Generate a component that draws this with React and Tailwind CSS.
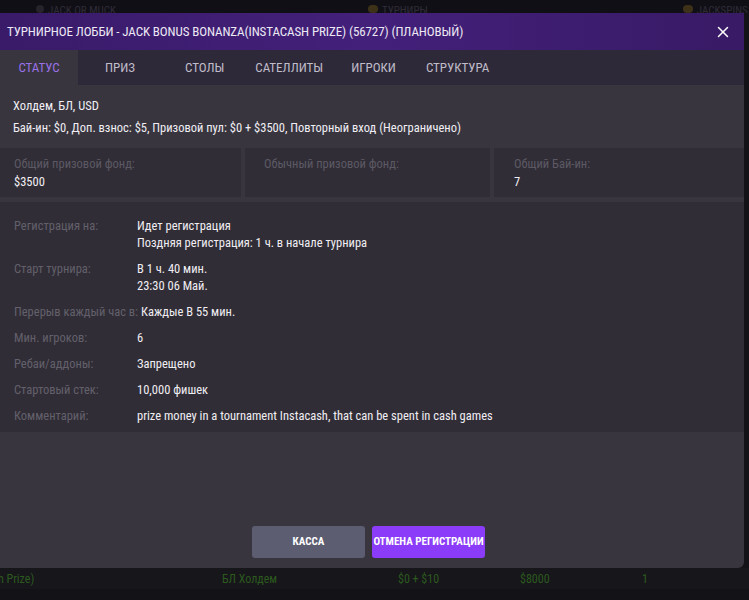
import { X } from "lucide-react";

const tabs = ["СТАТУС", "ПРИЗ", "СТОЛЫ", "САТЕЛЛИТЫ", "ИГРОКИ", "СТРУКТУРА"];

const details = [
  { label: "Регистрация на:", value: ["Идет регистрация", "Поздняя регистрация: 1 ч. в начале турнира"] },
  { label: "Старт турнира:", value: ["В 1 ч. 40 мин.", "23:30 06 Май."] },
  { label: "Перерыв каждый час в:", value: ["Каждые В 55 мин."], tight: true },
  { label: "Мин. игроков:", value: ["6"] },
  { label: "Ребаи/аддоны:", value: ["Запрещено"] },
  { label: "Стартовый стек:", value: ["10,000 фишек"] },
  { label: "Комментарий:", value: ["prize money in a tournament Instacash, that can be spent in cash games"] },
];

const stats = [
  { label: "Общий призовой фонд:", value: "$3500" },
  { label: "Обычный призовой фонд:", value: "" },
  { label: "Общий Бай-ин:", value: "7" },
];

export default function App() {
  return (
    <div
      className="relative h-[600px] w-[749px] overflow-hidden bg-[#131217] text-[13px]"
      style={{ fontFamily: '"Roboto Condensed", "Liberation Sans Narrow", "DejaVu Sans Condensed", Roboto, sans-serif' }}
    >
      {/* page behind the modal */}
      <div className="flex h-[13px] items-start overflow-hidden bg-[#110f16] pt-[5px] text-[11px] leading-[11px] uppercase text-[#2f2c36]">
        <span className="ml-[36px] mr-[4px] h-[8px] w-[8px] rounded-sm bg-[#26232b]" />
        <span>Jack or muck</span>
        <span className="ml-[252px] mr-[4px] h-[8px] w-[10px] rounded-sm bg-[#3d3218]" />
        <span>Турниры</span>
        <span className="ml-[255px] mr-[4px] h-[8px] w-[10px] rounded-sm bg-[#3d3218]" />
        <span>Jackspins</span>
      </div>

      <div className="flex w-[744px] flex-col rounded-br-md bg-[#38353f]">
        {/* header */}
        <div className="flex h-[37px] items-center justify-between bg-gradient-to-r from-[#391b69] via-[#43207a] to-[#381a66] pl-[7px] pr-[12px]">
          <span className="text-[13px] uppercase tracking-[-0.1px] text-[#ece8f4]">
            Турнирное лобби - Jack Bonus Bonanza(Instacash Prize) (56727) (Плановый)
          </span>
          <X className="h-[18px] w-[18px] text-white" strokeWidth={2} />
        </div>

        {/* tabs */}
        <div className="flex h-[35px] bg-[#2d2939] text-[13px] uppercase text-[#c0bcc9]">
          {tabs.map((t, i) => (
            <div
              key={t}
              className={`flex items-center ${
                i === 0 ? "w-[78px] justify-center bg-[#38353f] text-[#9a71e6]" : ""
              } ${i === 1 ? "ml-[27px]" : ""} ${i === 2 ? "ml-[50px]" : ""} ${i === 3 ? "ml-[31px]" : ""} ${
                i === 4 ? "ml-[28px]" : ""
              } ${i === 5 ? "ml-[30px]" : ""}`}
            >
              {t}
            </div>
          ))}
        </div>

        {/* summary */}
        <div className="flex h-[63px] flex-col gap-[4px] px-[13px] pt-[12px] text-[12.5px] leading-[18px] text-[#f0eef3]">
          <div>Холдем, БЛ, USD</div>
          <div>Бай-ин: $0, Доп. взнос: $5, Призовой пул: $0 + $3500, Повторный вход (Неограничено)</div>
        </div>

        {/* stat cards */}
        <div className="flex h-[49px] gap-[4px]">
          {stats.map((s, i) => (
            <div
              key={s.label}
              className={`flex flex-col bg-[#302d36] pl-[14px] pt-[7px] text-[12.5px] leading-[18px] ${
                i === 0 ? "w-[241px]" : i === 1 ? "w-[245px] pl-[19px]" : "flex-1 pl-[20px]"
              }`}
            >
              <span className="text-[#5c5964]">{s.label}</span>
              <span className="text-[#f0eef3]">{s.value}</span>
            </div>
          ))}
        </div>

        {/* details */}
        <div className="mt-[5px] flex h-[230px] flex-col bg-[#302d36] px-[14px] pt-[15px] text-[12.5px]">
          {details.map((d) => (
            <div key={d.label} className="flex pb-[9px]">
              <span className={`shrink-0 leading-[17px] text-[#63606b] ${d.tight ? "w-[127px]" : "w-[123px]"}`}>
                {d.label}
              </span>
              <div className="flex flex-col text-[#f0eef3]">
                {d.value.map((v) => (
                  <span key={v} className="leading-[17px]">
                    {v}
                  </span>
                ))}
              </div>
            </div>
          ))}
        </div>

        {/* buttons */}
        <div className="flex h-[136px] items-start justify-center gap-[7px] pt-[94px] pr-[7px] text-[11px] font-bold uppercase text-white">
          <button className="flex h-[32px] w-[113px] items-center justify-center rounded-[3px] bg-[#5c5d71] uppercase">
            Касса
          </button>
          <button className="flex h-[32px] w-[113px] items-center justify-center rounded-[3px] bg-[#8a3cf8] uppercase">
            Отмена регистрации
          </button>
        </div>
      </div>

      {/* table row behind */}
      <div className="flex h-[21px] items-center bg-[#17161b] text-[12px] text-[#2c5a1e]">
        <span className="-ml-[2px] w-[224px]">h Prize)</span>
        <span className="w-[176px]">БЛ Холдем</span>
        <span className="w-[122px]">$0 + $10</span>
        <span className="w-[122px]">$8000</span>
        <span>1</span>
      </div>
    </div>
  );
}
